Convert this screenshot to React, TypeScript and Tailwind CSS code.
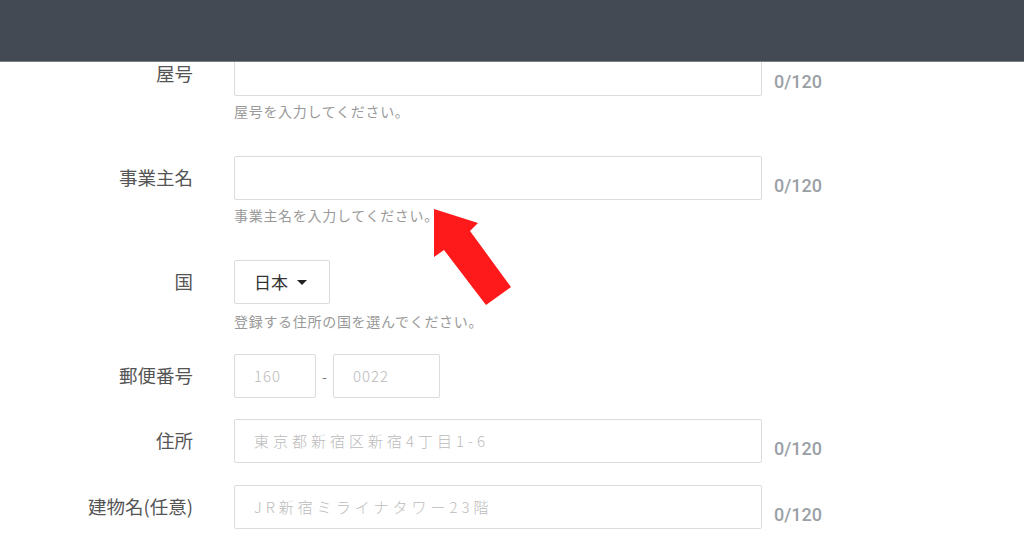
import React from "react";

const jp = { fontFamily: '"Noto Sans CJK JP", "Noto Sans", sans-serif' };
const roboto = { fontFamily: 'Roboto, "Liberation Sans", sans-serif' };

function Label({ children }: { children: React.ReactNode }) {
  return (
    <div className="w-[193px] shrink-0 h-[44px] flex items-center justify-end text-[18.5px] leading-[24px] pb-[2px] text-[#555]">
      {children}
    </div>
  );
}

function Counter() {
  return (
    <div
      className="ml-[12px] self-end mb-[2px] text-[18px] leading-[24px] font-medium text-[#9aa0a6]"
      style={roboto}
    >
      0/120
    </div>
  );
}

function Help({ children, mt }: { children: React.ReactNode; mt: string }) {
  return <div className={`text-[14px] leading-[20px] tracking-[0.7px] text-[#999] ${mt}`}>{children}</div>;
}

export default function App() {
  return (
    <div className="relative w-[1024px] h-[538px] overflow-hidden bg-white" style={jp}>
      <header className="relative z-10 h-[62px] bg-[#434a54] border-b border-[#7a7f86]" />
      <main className="-mt-[10px]">
        {/* 屋号 */}
        <div className="flex">
          <Label>屋号</Label>
          <div className="ml-[41px]">
            <div className="flex">
              <div className="w-[528px] h-[44px] border border-[#dcdcdc] rounded-[2px] bg-white" />
              <Counter />
            </div>
            <Help mt="mt-[5px]">屋号を入力してください。</Help>
          </div>
        </div>
        {/* 事業主名 */}
        <div className="flex mt-[35px]">
          <Label>事業主名</Label>
          <div className="ml-[41px]">
            <div className="flex">
              <div className="w-[528px] h-[44px] border border-[#dcdcdc] rounded-[2px] bg-white" />
              <Counter />
            </div>
            <Help mt="mt-[5px]">事業主名を入力してください。</Help>
          </div>
        </div>
        {/* 国 */}
        <div className="flex mt-[35px]">
          <Label>国</Label>
          <div className="ml-[41px]">
            <div className="w-[96px] h-[44px] border border-[#dcdcdc] rounded-[2px] bg-white flex items-center pl-[19px] text-[17px] text-[#333]">
              日本
              <svg width="10" height="6" viewBox="0 0 10 6" className="ml-[9px] mt-[1px]">
                <polygon points="0,0 10,0 5,5" fill="#222" />
              </svg>
            </div>
            <Help mt="mt-[7px]">登録する住所の国を選んでください。</Help>
          </div>
        </div>
        {/* 郵便番号 */}
        <div className="flex mt-[23px]">
          <Label>郵便番号</Label>
          <div className="ml-[41px] flex items-center">
            <div className="w-[82px] h-[44px] border border-[#dcdcdc] rounded-[2px] bg-white flex items-center pl-[19px] text-[15px] tracking-[1px] text-[#bbb] font-light">
              160
            </div>
            <div className="w-[17px] text-center text-[14px] text-[#777]">-</div>
            <div className="w-[107px] h-[44px] border border-[#dcdcdc] rounded-[2px] bg-white flex items-center pl-[19px] text-[15px] tracking-[1px] text-[#bbb] font-light">
              0022
            </div>
          </div>
        </div>
        {/* 住所 */}
        <div className="flex mt-[21px]">
          <Label>住所</Label>
          <div className="ml-[41px] flex">
            <div className="w-[528px] h-[44px] border border-[#dcdcdc] rounded-[2px] bg-white flex items-center pl-[19px] text-[15px] tracking-[4px] text-[#bbb] font-light">
              東京都新宿区新宿4丁目1-6
            </div>
            <Counter />
          </div>
        </div>
        {/* 建物名 */}
        <div className="flex mt-[22px]">
          <Label>建物名(任意)</Label>
          <div className="ml-[41px]">
            <div className="flex">
              <div className="w-[528px] h-[44px] border border-[#dcdcdc] rounded-[2px] bg-white flex items-center pl-[19px] text-[15px] tracking-[4px] text-[#bbb] font-light">
                JR新宿ミライナタワー23階
              </div>
              <Counter />
            </div>
            <Help mt="mt-[5px]">建物名・部屋番号を入力してください。</Help>
          </div>
        </div>
      </main>
      <svg
        className="absolute left-0 top-0 pointer-events-none"
        width="1024"
        height="538"
        viewBox="0 0 1024 538"
      >
        <polygon
          points="434,209 478,223 470,231 511,287 486,305 444,250 434,257"
          fill="#fe1a1a"
        />
      </svg>
    </div>
  );
}
